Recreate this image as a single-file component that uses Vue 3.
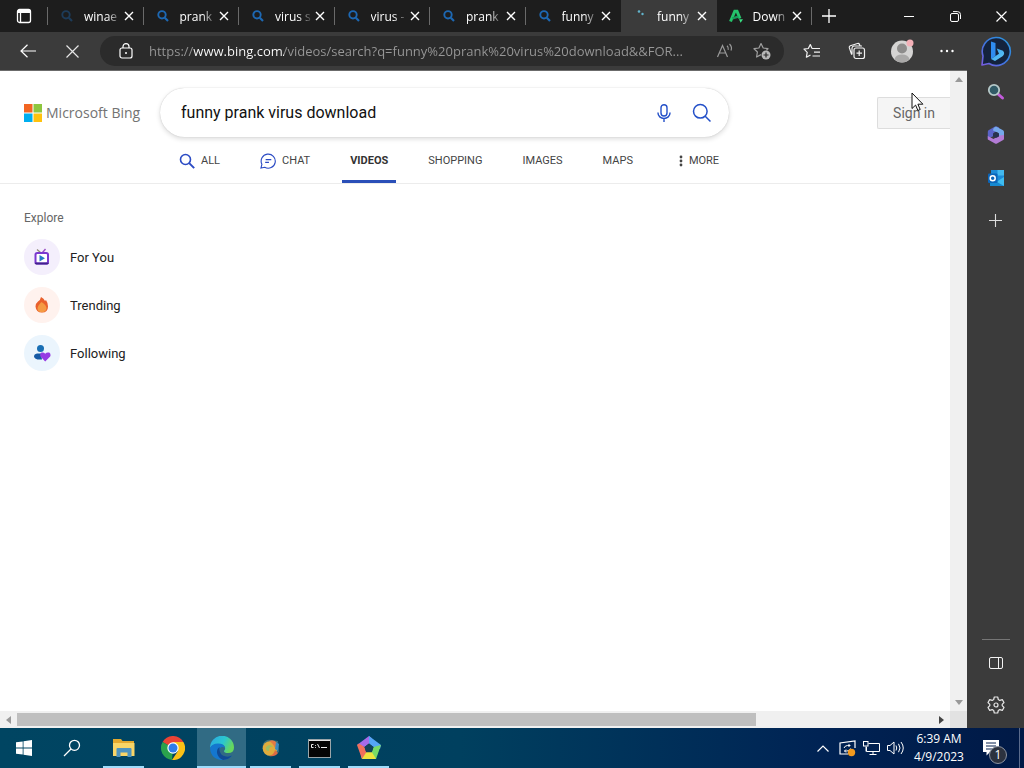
<script setup>
import { ref } from 'vue'

const query = ref('funny prank virus download')
const address = ref('https://www.bing.com/videos/search?q=funny%20prank%20virus%20download&&FOR...')

const tabs = ref([
  { id: 1, title: 'winae', icon: 'search', faded: true },
  { id: 2, title: 'prank', icon: 'search' },
  { id: 3, title: 'virus s', icon: 'search' },
  { id: 4, title: 'virus -', icon: 'search' },
  { id: 5, title: 'prank', icon: 'search' },
  { id: 6, title: 'funny', icon: 'search' },
  { id: 7, title: 'funny', icon: 'loading' },
  { id: 8, title: 'Down', icon: 'letter' },
])
const activeTab = ref(7)

const scopes = [
  { name: 'ALL', icon: 'search' },
  { name: 'CHAT', icon: 'chat' },
  { name: 'VIDEOS', active: true },
  { name: 'SHOPPING' },
  { name: 'IMAGES' },
  { name: 'MAPS' },
]

const explore = [
  { name: 'For You', icon: 'tv' },
  { name: 'Trending', icon: 'fire' },
  { name: 'Following', icon: 'people' },
]

function closeTab(id) {
  tabs.value = tabs.value.filter((tab) => tab.id !== id)
}
</script>

<template>
  <div class="desktop">
    <header class="tabstrip">
      <button class="tab-menu" aria-label="Tab actions">
        <svg width="16" height="16" viewBox="0 0 16 16" fill="none" stroke="#fff" stroke-width="1.3">
          <rect x="1.5" y="1.5" width="13" height="13" rx="2" />
          <path d="M2 3.5h12" stroke-width="3" />
          <path d="M4.5 4v10" />
        </svg>
      </button>
      <div class="tabs">
        <div v-for="tab in tabs" :key="tab.id" class="tab" :class="{ active: tab.id === activeTab }">
          <button class="tab-main" @click="activeTab = tab.id">
            <svg v-if="tab.icon === 'search'" class="favicon" :class="{ faded: tab.faded }" viewBox="0 0 14 14" fill="none" stroke="#1d68b3">
              <circle cx="6" cy="5.8" r="3.7" stroke-width="1.9" />
              <path d="M8.8 8.8l3.2 3.2" stroke-width="2.2" />
            </svg>
            <svg v-else-if="tab.icon === 'loading'" class="favicon" viewBox="0 0 14 14" fill="#62b4cc">
              <circle cx="6" cy="2.5" r="1.3" />
              <circle cx="9.5" cy="5" r="1.2" />
            </svg>
            <svg v-else class="favicon" viewBox="0 0 14 14" fill="none">
              <path d="M1.5 12.5L5.800 2.200h2.200l3 7.300" stroke="#25c36b" stroke-width="3" />
              <path d="M3.400 9.400l6-1.800" stroke="#159c58" stroke-width="2.400" />
              <path d="M10 10.300h4l-2.400 3.400z" fill="#3be084" />
            </svg>
            <span class="tab-title">{{ tab.title }}</span>
          </button>
          <button class="tab-close" aria-label="Close tab" @click="closeTab(tab.id)">
            <svg width="10" height="10" viewBox="0 0 10 10" stroke="#fff" stroke-width="1.4"><path d="M1 1l8 8M9 1l-8 8" /></svg>
          </button>
        </div>
      </div>
      <button class="new-tab" aria-label="New tab">
        <svg width="14" height="14" viewBox="0 0 14 14" stroke="#fff" stroke-width="1.3"><path d="M7 0v14M0 7h14" /></svg>
      </button>
      <div class="window-buttons">
        <button aria-label="Minimize">
          <svg width="10" height="10" viewBox="0 0 10 10" stroke="#fff"><path d="M0 5.5h10" /></svg>
        </button>
        <button aria-label="Restore">
          <svg width="11" height="11" viewBox="0 0 11 11" fill="none" stroke="#fff">
            <rect x=".5" y="2.5" width="8" height="8" rx="1.5" />
            <path d="M3 .6h4.5a3 3 0 0 1 3 3V8" />
          </svg>
        </button>
        <button aria-label="Close">
          <svg width="11" height="11" viewBox="0 0 11 11" stroke="#fff" stroke-width="1.2"><path d="M.5 .5l10 10M10.5 .5l-10 10" /></svg>
        </button>
      </div>
    </header>

    <div class="window">
      <div class="content">
        <div class="toolbar">
          <div class="nav-buttons">
            <button aria-label="Back">
              <svg width="16" height="14" viewBox="0 0 16 14" fill="none" stroke="#fff" stroke-width="1.2"><path d="M16 7H1M7.5 .7L1 7l6.5 6.3" /></svg>
            </button>
            <button aria-label="Stop">
              <svg width="13" height="13" viewBox="0 0 13 13" stroke="#e6e6e6" stroke-width="1.2"><path d="M.5 .5l12 12M12.5 .5l-12 12" /></svg>
            </button>
          </div>
          <div class="address">
            <svg class="lock" width="24" height="16" viewBox="0 0 24 16" fill="none" stroke="#fff" stroke-width="1.2">
              <rect x="6" y="5" width="12" height="10" rx="2" />
              <path d="M9 5V3.6a3 3 0 0 1 6 0V5" />
              <circle cx="12" cy="10" r="1" fill="#fff" stroke="none" />
            </svg>
            <input v-model="address" class="address-input" type="text" aria-label="Address bar" spellcheck="false" />
            <button aria-label="Read aloud">
              <svg width="18" height="16" viewBox="0 0 18 16" fill="none" stroke="#999" stroke-width="1.2">
                <path d="M1.500 14L6.500 2.500l5 11.500M3.300 10h6.500" />
                <path d="M11 2.800q1.800 1.700 1.200 4M13.500 1q3 3 1.500 6.500" />
              </svg>
            </button>
            <button aria-label="Add to favorites">
              <svg width="18" height="18" viewBox="0 0 18 18" fill="none">
                <path d="M8 12.6l-4.4 2.4.8-5L1 6.700l4.900-.7L8 1.500 10.200 6l4.800.7-1.600 1.500" stroke="#a0a0a0" stroke-width="1.2" stroke-linejoin="round" />
                <circle cx="13" cy="13" r="4.5" fill="#b8b8b8" />
                <path d="M13 10.5v5M10.5 13h5" stroke="#2b2b2b" stroke-width="1.2" />
              </svg>
            </button>
          </div>
          <div class="actions">
            <button aria-label="Favorites">
              <svg width="18" height="16" viewBox="0 0 18 16" fill="none" stroke="#f2f2f2" stroke-width="1.2" stroke-linejoin="round">
                <path d="M9 5.500L7.300 1.500 5.300 5.500 1 6.200l3.200 3.200-.8 4.800 4.100-2.300" />
                <path d="M9 5.500h8M11 9.200h6M9.500 13h7.500" />
              </svg>
            </button>
            <button aria-label="Collections">
              <svg width="18" height="18" viewBox="0 0 18 18" fill="none" stroke="#f2f2f2" stroke-width="1.2">
                <rect x="6" y="6" width="10.500" height="10.500" rx="2" />
                <path d="M11.200 8.500v5.500M8.500 11.200H14M4 12.500l-.5-.3-2.200-6.500q-.3-1.500 1-2L9.500 1.500q1.500-.3 2 1l.5 1.300M4 12.500V6q.2-1.800 2-2h8" />
              </svg>
            </button>
            <button aria-label="Profile">
              <svg width="24" height="24" viewBox="0 0 24 24">
                <circle cx="12" cy="12.500" r="11" fill="#d5d4d3" />
                <circle cx="12" cy="9.500" r="5" fill="#8d8c8b" />
                <path d="M4.500 20.500q1-5 7.500-5t7.500 5a11 11 0 0 1-15 0z" fill="#aaa9a8" />
                <circle cx="20" cy="4" r="3.500" fill="#f4b1b8" />
              </svg>
            </button>
            <button aria-label="Settings and more">
              <svg width="14" height="4" viewBox="0 0 14 4" fill="#fff"><circle cx="1.5" cy="2" r="1.2" /><circle cx="7" cy="2" r="1.2" /><circle cx="12.5" cy="2" r="1.2" /></svg>
            </button>
          </div>
        </div>

        <div class="viewport">
          <main class="page">
            <div class="page-header">
              <div class="search-row">
                <a class="logo" href="#">
                  <svg width="18" height="18" viewBox="0 0 18 18">
                    <path d="M0 0h8.500v8.500H0z" fill="#f26522" />
                    <path d="M9.500 0H18v8.500H9.500z" fill="#8dc63f" />
                    <path d="M0 9.500h8.500V18H0z" fill="#00aeef" />
                    <path d="M9.500 9.500H18V18H9.500z" fill="#ffc20e" />
                  </svg>
                  <span>Microsoft Bing</span>
                </a>
                <form class="search-box" @submit.prevent>
                  <input v-model="query" type="text" aria-label="Search" spellcheck="false" />
                  <button type="button" aria-label="Search by voice">
                    <svg width="14" height="18" viewBox="0 0 14 18" fill="none" stroke="#2450c8" stroke-width="1.4">
                      <rect x="4" y=".7" width="6" height="11.3" rx="3" />
                      <path d="M1 8.500v.5a6 5.500 0 0 0 12 0v-.5M7 14.500V18" />
                    </svg>
                  </button>
                  <button aria-label="Search">
                    <svg width="20" height="20" viewBox="0 0 20 20" fill="none" stroke="#2450c8" stroke-width="1.5">
                      <circle cx="8.300" cy="8.300" r="6.800" />
                      <path d="M13.200 13.200l5.300 5.300" />
                    </svg>
                  </button>
                </form>
                <a class="sign-in" href="#">Sign in</a>
              </div>
              <nav class="scopes">
                <a v-for="scope in scopes" :key="scope.name" href="#" :class="{ active: scope.active }">
                  <svg v-if="scope.icon === 'search'" width="16" height="16" viewBox="0 0 16 16" fill="none" stroke="#2b4bc4" stroke-width="1.6">
                    <circle cx="6.500" cy="6.500" r="5" />
                    <path d="M10.200 10.200l5 5" stroke-width="1.9" />
                  </svg>
                  <svg v-if="scope.icon === 'chat'" width="16" height="16" viewBox="0 0 17 17" fill="none" stroke="#2b4bc4" stroke-width="1.2">
                    <path d="M1 16l1-4A7.500 7.500 0 1 1 5 15.200z" />
                    <path d="M6 7h6M5.500 10h4" />
                  </svg>
                  <span>{{ scope.name }}</span>
                </a>
                <a class="more" href="#">
                  <svg width="4" height="12" viewBox="0 0 4 12" fill="#444"><circle cx="2" cy="2" r="1.4" /><circle cx="2" cy="6" r="1.4" /><circle cx="2" cy="10" r="1.4" /></svg>
                  <span>MORE</span>
                </a>
              </nav>
              <svg class="cursor" width="13" height="20" viewBox="0 0 13 20">
                <path d="M1 1v15.500l3.600-3.400 2.300 5.400 2.300-1-2.300-5.300h5z" fill="#fff" stroke="#111" />
              </svg>
            </div>
            <section class="explore">
              <h2>Explore</h2>
              <a v-for="item in explore" :key="item.name" href="#">
                <span class="bubble" :class="item.icon">
                  <svg v-if="item.icon === 'tv'" width="18" height="18" viewBox="0 0 18 18" fill="none">
                    <path d="M4 1.500l3.500 3" stroke="#8f8a78" stroke-width="1.2" />
                    <path d="M12.500 1L9.500 4.500" stroke="#9a4fc4" stroke-width="1.4" />
                    <rect x="2.500" y="5" width="12.500" height="10.500" rx="1.800" fill="#fff" stroke="#7a38cf" stroke-width="2" />
                    <path d="M2.500 14.800q0 .7 1 .7h10.500q1 0 1-.7" stroke="#43208f" stroke-width="2" />
                    <path d="M6.500 7l5.500 3.200-5.500 3.200z" fill="#247bc6" />
                  </svg>
                  <svg v-else-if="item.icon === 'fire'" width="18" height="18" viewBox="0 0 18 18">
                    <path d="M8 1q3 1.500 4 4l1-1q2 3 2 6.500 0 6-6 6t-6.500-6q0-3 2.500-5Q7.500 4 8 1z" fill="#e9602c" />
                    <path d="M8.500 6q5.500 3.500 5 7-.8 3-4.500 3.200T4.500 13q-.2-3 4-7z" fill="#f59a43" />
                  </svg>
                  <svg v-else width="18" height="18" viewBox="0 0 18 18">
                    <circle cx="7.500" cy="4.500" r="3.500" fill="#196fb4" />
                    <path d="M4 9.500h4l1 6q-7.500.7-8-3 0-2.500 3-3z" fill="#165aa5" />
                    <path d="M12.200 17.500L7.500 12.500q-1-2.500 1-3.900 2.200-.7 3.700 1.100 1.600-1.800 4-1.100 2 1.400 1 3.900z" fill="#963be4" />
                  </svg>
                </span>
                {{ item.name }}
              </a>
            </section>
          </main>
          <div class="scroll-y">
            <button aria-label="Scroll up"><svg width="8" height="5" viewBox="0 0 8 5" fill="#999"><path d="M0 5l4-5 4 5z" /></svg></button>
            <button aria-label="Scroll down"><svg width="8" height="5" viewBox="0 0 8 5" fill="#999"><path d="M0 0h8L4 5z" /></svg></button>
          </div>
        </div>
        <div class="scroll-x">
          <button aria-label="Scroll left"><svg width="5" height="8" viewBox="0 0 5 8" fill="#999"><path d="M5 0v8L0 4z" /></svg></button>
          <div class="track"><div class="thumb"></div></div>
          <button aria-label="Scroll right"><svg width="5" height="8" viewBox="0 0 5 8" fill="#444"><path d="M0 0v8l5-4z" /></svg></button>
          <div class="corner"></div>
        </div>
      </div>

      <aside class="sidebar">
        <button class="discover" aria-label="Discover">
          <svg width="32" height="32" viewBox="0 0 32 32" fill="none">
            <defs>
              <linearGradient id="ring" x1="0" y1="1" x2="1" y2="0"><stop offset="0" stop-color="#7a5ce0" /><stop offset=".5" stop-color="#3a78e0" /><stop offset="1" stop-color="#2b98dc" /></linearGradient>
              <linearGradient id="bee" x1="0" y1="0" x2="1" y2="1"><stop offset="0" stop-color="#35a4f2" /><stop offset="1" stop-color="#62c4f4" /></linearGradient>
            </defs>
            <path d="M2 30l1-9A14 14 0 1 1 9 28.500z" fill="#14233d" stroke="url(#ring)" stroke-width="1.6" stroke-linejoin="round" />
            <path d="M11 6.500l4.500 1.600v13l-4.500 3z" fill="#2f8cf0" />
            <path d="M15.500 21.100l3.500-2.300-2.300-5.300 6.300 2.300q2.500 3-.5 5.400L15 26l-4-1.900z" fill="url(#bee)" />
          </svg>
        </button>
        <button aria-label="Search">
          <svg width="18" height="18" viewBox="0 0 18 18" fill="none">
            <path d="M11 11l4.500 4" stroke="#c35bdc" stroke-width="3" stroke-linecap="round" />
            <circle cx="7" cy="7" r="5.200" fill="#315a66" stroke="#b5c8c8" stroke-width="1.8" />
          </svg>
        </button>
        <button aria-label="Microsoft 365">
          <svg width="18" height="18" viewBox="0 0 18 18">
            <path d="M8 .5L1.500 4.200Q.8 4.800.8 6v7l5.700-3V7L12 4V1.500Q10 0 8 .5z" fill="#5a63c8" />
            <path d="M9 .5l7 3.800q1 .7 1 2v6.500L11.500 9.500V7L6 4.500q0-3 3-4z" fill="#75a8ea" />
            <path d="M17 9v3.500q0 1-.8 1.500L10 17.500q-1 .4-2 0L.8 13.500V10l5.700 3L12 9.500z" fill="#b27bd5" />
            <path d="M9 6l3 1.500v3L9 12l-3-1.500v-3z" fill="#27324f" />
          </svg>
        </button>
        <button aria-label="Outlook">
          <svg width="18" height="18" viewBox="0 0 18 18">
            <path d="M4 1h13v11H4z" fill="#1c8bd7" />
            <path d="M10.500 1H17v5.500h-6.500z" fill="#43b9ee" />
            <path d="M3 17L17 8v9z" fill="#3fbdf0" />
            <path d="M3 9l14 8H3z" fill="#1689d0" />
            <rect x="1" y="4.500" width="9.500" height="9.500" rx="1" fill="#0b65b8" />
            <circle cx="5.700" cy="9.200" r="2.500" fill="none" stroke="#fff" stroke-width="1.5" />
          </svg>
        </button>
        <button aria-label="Customize">
          <svg width="13" height="13" viewBox="0 0 13 13" stroke="#ddd" stroke-width="1.1"><path d="M6.500 0v13M0 6.500h13" /></svg>
        </button>
        <hr />
        <button aria-label="Hide sidebar">
          <svg width="14" height="12" viewBox="0 0 14 12" fill="none" stroke="#f2f2f2"><rect x=".5" y=".5" width="13" height="11" rx="1.5" /><path d="M9.500 .5v11" /></svg>
        </button>
        <button aria-label="Settings">
          <svg width="18" height="18" viewBox="0 0 18 18" fill="none" stroke="#e6e6e6" stroke-width="1.2" stroke-linejoin="round">
            <path d="M7.300 1h3.400l.6 2.500 1.500.9 2.500-.8L17 6.500 15.200 8.300v1.400L17 11.500l-1.700 2.900-2.500-.8-1.500.9-.6 2.500H7.300l-.6-2.500-1.500-.9-2.500.8L1 11.500l1.800-1.800V8.300L1 6.500l1.700-2.900 2.500.8 1.500-.9z" />
            <circle cx="9" cy="9" r="2" />
          </svg>
        </button>
      </aside>
    </div>

    <footer class="taskbar">
      <button aria-label="Start">
        <svg width="16" height="16" viewBox="0 0 16 16" fill="#fff"><path d="M0 2.300l6.700-.9v6.200H0zM7.500 1.300L16 0v7.600H7.500zM0 8.400h6.700v6.200L0 13.700zM7.500 8.400H16V16l-8.500-1.200z" /></svg>
      </button>
      <button aria-label="Search">
        <svg width="18" height="18" viewBox="0 0 18 18" fill="none" stroke="#fff" stroke-width="1.3"><circle cx="11.500" cy="6.300" r="5" /><path d="M8 10L1 17" /></svg>
      </button>
      <div class="apps">
        <button class="running" aria-label="File Explorer">
          <svg width="22" height="20" viewBox="0 0 22 20">
            <path d="M0 1h8l1.500 2H21v4H0z" fill="#e3a92f" />
            <path d="M0 5h21.500v13H0z" fill="#f8d567" />
            <path d="M3.500 19V11q0-1 1-1h13q1 0 1 1v8h-4v-4.500h-7V19z" fill="#4d93c0" />
          </svg>
        </button>
        <button aria-label="Chrome">
          <svg width="24" height="24" viewBox="0 0 24 24">
            <path d="M12 12L1.600 6A12 12 0 0 1 22.400 6z" fill="#ea4335" />
            <path d="M12 12l-1 12A12 12 0 0 1 1.600 6z" fill="#2ba24c" />
            <path d="M12 6h10.400A12 12 0 0 1 11 24l6-9z" fill="#fbc116" />
            <circle cx="12" cy="12" r="5.700" fill="#fff" />
            <circle cx="12" cy="12" r="4.500" fill="#2f7de9" />
          </svg>
        </button>
        <button class="running current" aria-label="Edge">
          <svg width="24" height="24" viewBox="0 0 24 24">
            <defs>
              <linearGradient id="wave" x1="0" y1="0" x2="1" y2=".4"><stop offset="0" stop-color="#2aa6e4" /><stop offset=".6" stop-color="#2bc7cf" /><stop offset="1" stop-color="#66d85d" /></linearGradient>
            </defs>
            <path d="M0 12A12 12 0 0 1 24 11.500Q24 17 18 17q-4 0-4-2 1.500-1.500 1-3.500Q14 8 9 8 2 8 0 12z" fill="url(#wave)" />
            <path d="M0 12Q2 7.500 8 7.500q6 0 7 4-5-1.500-5.500 2.500 0 6 6.500 7 3 .2 6-1.500Q18 24 12 24 1 23.500 0 12z" fill="#1477cf" />
            <path d="M9.500 11q-3 2-2.500 6 1 5 6 7 6-.5 9-4.500-3 1.500-6 1-6-1-6.500-6.500z" fill="#114a94" />
          </svg>
        </button>
        <button class="running" aria-label="Paint">
          <svg width="20" height="18" viewBox="0 0 20 18">
            <path d="M2 5q3-5 8-4l7 1 1 11-6 4H7Q0 13 2 5z" fill="#376d79" />
            <circle cx="9" cy="9.500" r="7.300" fill="#dfac3c" />
            <path d="M8 2q5-2 8 2l-2 5q-2-5-6-7z" fill="#e27a45" />
            <path d="M15 3l3 2-1 7-3-2z" fill="#398ac0" />
            <path d="M14 11q-1 5-6 6 6 1 9-3z" fill="#dc6b43" />
            <path d="M5 8q4-4 7 0-4-1-4 4-4 0-3-4z" fill="#a0bd60" />
          </svg>
        </button>
        <button class="running" aria-label="Command Prompt">
          <svg width="23" height="19" viewBox="0 0 23 19" fill="none">
            <rect x=".5" y=".5" width="22" height="18" fill="#050505" stroke="#9ba5a9" />
            <path d="M1 1.500h21" stroke="#e5e5e5" />
            <path d="M5.500 5.500H3.500v3h2M7.500 6v.8M7.500 8v.8M9.500 5l2 4M13 8.500h6" stroke="#eee" />
          </svg>
        </button>
        <button class="running" aria-label="Pentagon">
          <svg width="24" height="24" viewBox="0 0 24 24">
            <path d="M12 0L0 9l7.500 2L12 7.500l3-5z" fill="#a66bea" />
            <path d="M12 0l12 9-1 4-6.500-2L12 7.500z" fill="#55a5f5" />
            <path d="M24 9l-5 14-5-1 .8-6 1.700-5z" fill="#79da67" />
            <path d="M19 23H5l-1-3 5.200-4h5.600z" fill="#eee43e" />
            <path d="M5 23L0 9l2-1.500L7.500 11l1.700 5.200z" fill="#f0705c" />
            <path d="M12 7.500l4.500 3.500-1.700 5.200H9.200L7.500 11z" fill="#12415a" />
          </svg>
        </button>
      </div>
      <div class="tray">
        <button aria-label="Show hidden icons"><svg width="12" height="7" viewBox="0 0 12 7" fill="none" stroke="#fff" stroke-width="1.2"><path d="M.5 6.500L6 1l5.500 5.500" /></svg></button>
        <button aria-label="Windows Update">
          <svg width="17" height="17" viewBox="0 0 17 17" fill="none" stroke="#fff">
            <path d="M16 8V1L1 3v11h8" stroke-width="1.2" />
            <path d="M5 8q1-2.500 3.500-2.500H11M9.500 4l1.500 1.500L9.500 7M11.500 8.500Q10.500 11 8 11H5.500M7 9.500L5.500 11 7 12.500" />
            <circle cx="12.500" cy="12.500" r="3.700" fill="#f39a1e" stroke="none" />
          </svg>
        </button>
        <button aria-label="Network">
          <svg width="17" height="14" viewBox="0 0 17 14" fill="none" stroke="#fff"><path d="M5.500 2.500h11v8h-13V6M10 10.500v3M6.500 13.500h7M3 5.500v5" /><rect x=".5" y=".5" width="4.500" height="4.500" /></svg>
        </button>
        <button aria-label="Volume">
          <svg width="17" height="14" viewBox="0 0 17 14" fill="none" stroke="#fff"><path d="M.5 4.500h2.500L7 1v12L3 9.500H.5zM9 4.500q1.500 2.500 0 5M11.500 2.800q3 4.200 0 8.400M14 1q4.500 6 0 12" /></svg>
        </button>
        <button class="clock"><span>6:39 AM</span><span>4/9/2023</span></button>
        <button class="notices" aria-label="Notifications">
          <svg width="18" height="18" viewBox="0 0 18 18"><path d="M1 1h16v12H8l-3.500 3.500V13H1z" fill="#fff" /><path d="M4 4h10M4 7h10M4 10h7" stroke="#06204e" /></svg>
          <span class="badge">1</span>
        </button>
        <div class="show-desktop"></div>
      </div>
    </footer>
  </div>
</template>

<style>
body {
  margin: 0;
}
</style>

<style scoped>
.desktop {
  display: flex;
  flex-direction: column;
  height: 100vh;
  overflow: hidden;
  font-family: 'Open Sans', 'Noto Sans', sans-serif;
  font-size: 12px;
}
button {
  display: flex;
  align-items: center;
  justify-content: center;
  padding: 0;
  border: 0;
  background: none;
  color: inherit;
  font: inherit;
}
svg {
  flex: none;
}
a {
  color: inherit;
  text-decoration: none;
}
input {
  flex: 1;
  min-width: 0;
  padding: 0;
  border: 0;
  outline: 0;
  background: none;
}

/* tabs */
.tabstrip {
  display: flex;
  flex: none;
  height: 32px;
  background: #1d1d1d;
  color: #fff;
}
.tab-menu {
  width: 48px;
  flex: none;
}
.tabs {
  display: flex;
  flex: 0 1 764px;
  min-width: 0;
}
.tab {
  position: relative;
  display: flex;
  flex: 1;
  min-width: 0;
  padding: 0 8px 0 12px;
}
.tab::before,
.tab:last-child::after {
  content: '';
  position: absolute;
  left: -1px;
  top: 7px;
  width: 1px;
  height: 18px;
  background: #6a6a6a;
}
.tab:last-child::after {
  left: auto;
  right: 0;
}
.tab.active {
  background: #3b3b3b;
}
.tab.active::before,
.tab.active + .tab::before {
  display: none;
}
.tab-main {
  flex: 1;
  min-width: 0;
  gap: 10px;
  justify-content: flex-start;
}
.favicon {
  width: 14px;
  height: 14px;
}
.favicon.faded {
  opacity: 0.4;
}
.tab-title {
  flex: 1;
  min-width: 0;
  white-space: nowrap;
  text-align: left;
  mask-image: linear-gradient(90deg, #000 60%, transparent);
}
.tab-close {
  width: 14px;
}
.new-tab {
  width: 34px;
}
.window-buttons {
  display: flex;
  margin-left: auto;
}
.window-buttons button {
  width: 46px;
}

/* toolbar */
.window {
  display: flex;
  flex: 1;
  min-height: 0;
  background: #3b3b3b;
}
.content {
  display: flex;
  flex-direction: column;
  flex: 1;
  min-width: 0;
}
.toolbar {
  display: flex;
  flex: none;
  align-items: center;
  gap: 10px;
  height: 38px;
  padding: 0 2px 0 10px;
  border-bottom: 1px solid #6b6b6b;
}
.toolbar button {
  height: 30px;
}
.nav-buttons {
  display: flex;
  gap: 8px;
}
.nav-buttons button,
.actions button {
  width: 36px;
}
.address {
  display: flex;
  flex: 1;
  align-items: center;
  gap: 7px;
  min-width: 0;
  height: 30px;
  padding: 0 7px 0 14px;
  border-radius: 15px;
  background: #2b2b2b;
}
.address button {
  width: 30px;
}
.address-input {
  margin-left: 4px;
  height: 24px;
  background: linear-gradient(90deg, #989898 44px, #fff 44px, #fff 135px, #989898 135px);
  background-clip: text;
  color: transparent;
  caret-color: #fff;
  font-family: 'Open Sans', 'Noto Sans', sans-serif;
  font-size: 13px;
}
.actions {
  display: flex;
  gap: 9px;
}

/* page */
.viewport {
  display: flex;
  flex: 1;
  min-height: 0;
  background: #fff;
}
.page {
  flex: 1;
  min-width: 0;
  overflow: hidden;
  font-family: Roboto, sans-serif;
}
.page-header {
  position: relative;
  border-bottom: 1px solid #ececec;
}
.search-row {
  display: flex;
  align-items: center;
  padding: 17px 0 0 24px;
}
.logo {
  display: flex;
  align-items: center;
  gap: 4px;
  width: 136px;
  color: #737373;
  font-family: 'Open Sans', sans-serif;
  font-size: 14px;
  font-weight: 500;
  white-space: nowrap;
}
.search-box {
  display: flex;
  flex: 0 1 569px;
  align-items: center;
  box-sizing: border-box;
  height: 49px;
  padding: 0 8px 0 21px;
  border-radius: 25px;
  box-shadow: 0 0 1px #bbb, 0 2px 5px rgba(0, 0, 0, 0.14);
}
.search-box input {
  color: #111;
  font-family: Roboto, sans-serif;
  font-size: 16px;
}
.search-box button {
  width: 38px;
  height: 38px;
}
.sign-in {
  margin-left: auto;
  padding: 0 15px;
  border: 1px solid #ddd;
  border-right: 0;
  border-radius: 2px 0 0 2px;
  background: #f5f5f5;
  color: #666;
  font-size: 14px;
  line-height: 30px;
}
.cursor {
  position: absolute;
  right: 26px;
  top: 21px;
}
.scopes {
  display: flex;
  gap: 24px;
  height: 46px;
  padding-left: 171px;
  color: #444;
  font-size: 11px;
}
.scopes a {
  display: flex;
  align-items: center;
  gap: 6px;
  padding: 4px 8px 0;
  border-bottom: 3px solid transparent;
}
.scopes .active {
  border-color: #2a4fb8;
  color: #333;
  font-weight: 700;
}
.scopes .more {
  margin-left: 6px;
}
.explore {
  padding: 26px 24px;
  color: #222;
  font-size: 13px;
}
.explore h2 {
  margin: 0 0 7px;
  color: #666;
  font-size: 12px;
  font-weight: 400;
  line-height: 16px;
}
.explore a {
  display: flex;
  align-items: center;
  gap: 10px;
  height: 48px;
}
.bubble {
  display: flex;
  align-items: center;
  justify-content: center;
  width: 36px;
  height: 36px;
  border-radius: 50%;
}
.bubble.tv {
  background: #f4effc;
}
.bubble.fire {
  background: #fff2ee;
}
.bubble.people {
  background: #ebf5fd;
}
.scroll-y {
  display: flex;
  flex-direction: column;
  justify-content: space-between;
  width: 17px;
  background: #f0f0f0;
}
.scroll-y button {
  height: 17px;
}
.scroll-x {
  display: flex;
  flex: none;
  height: 17px;
  background: #f0f0f0;
}
.scroll-x button,
.corner {
  width: 17px;
}
.corner {
  background: #e2e2e2;
}
.track {
  flex: 1;
  padding: 2px 0;
}
.thumb {
  width: 80.7%;
  height: 13px;
  background: #bfbfbf;
}

/* sidebar */
.sidebar {
  display: flex;
  flex: none;
  flex-direction: column;
  width: 57px;
  padding-bottom: 2px;
  box-sizing: border-box;
}
.sidebar button {
  height: 43px;
}
.sidebar .discover {
  height: 38px;
}
.sidebar hr {
  width: 28px;
  height: 1px;
  margin: auto auto 2px;
  border: 0;
  background: #767676;
}
.sidebar hr ~ button {
  height: 42px;
}

/* taskbar */
.taskbar {
  display: flex;
  flex: none;
  height: 40px;
  background: linear-gradient(90deg, #004562, #00405f 45%, #002354 80%, #001946);
  color: #fff;
}
.taskbar > button {
  width: 48px;
}
.apps {
  display: flex;
  margin-left: 3px;
}
.apps button {
  position: relative;
  width: 49px;
}
.running::after {
  content: '';
  position: absolute;
  left: 4px;
  right: 4px;
  bottom: 0;
  height: 2px;
  background: #9edcfb;
}
.current {
  background: #316b84;
}
.current::after {
  left: 0;
  right: 0;
}
.tray {
  display: flex;
  margin-left: auto;
}
.tray button {
  width: 24px;
}
.tray .clock {
  flex-direction: column;
  width: 64px;
  line-height: 18px;
}
.tray .notices {
  position: relative;
  width: 48px;
}
.notices svg {
  margin-right: 8px;
}
.badge {
  position: absolute;
  right: 12px;
  bottom: 4px;
  width: 16px;
  border: 1px solid #8c93a0;
  border-radius: 50%;
  background: #2c323f;
  font-size: 12px;
  line-height: 16px;
}
.show-desktop {
  width: 4px;
  border-left: 1px solid #5a6b8c;
}
</style>
